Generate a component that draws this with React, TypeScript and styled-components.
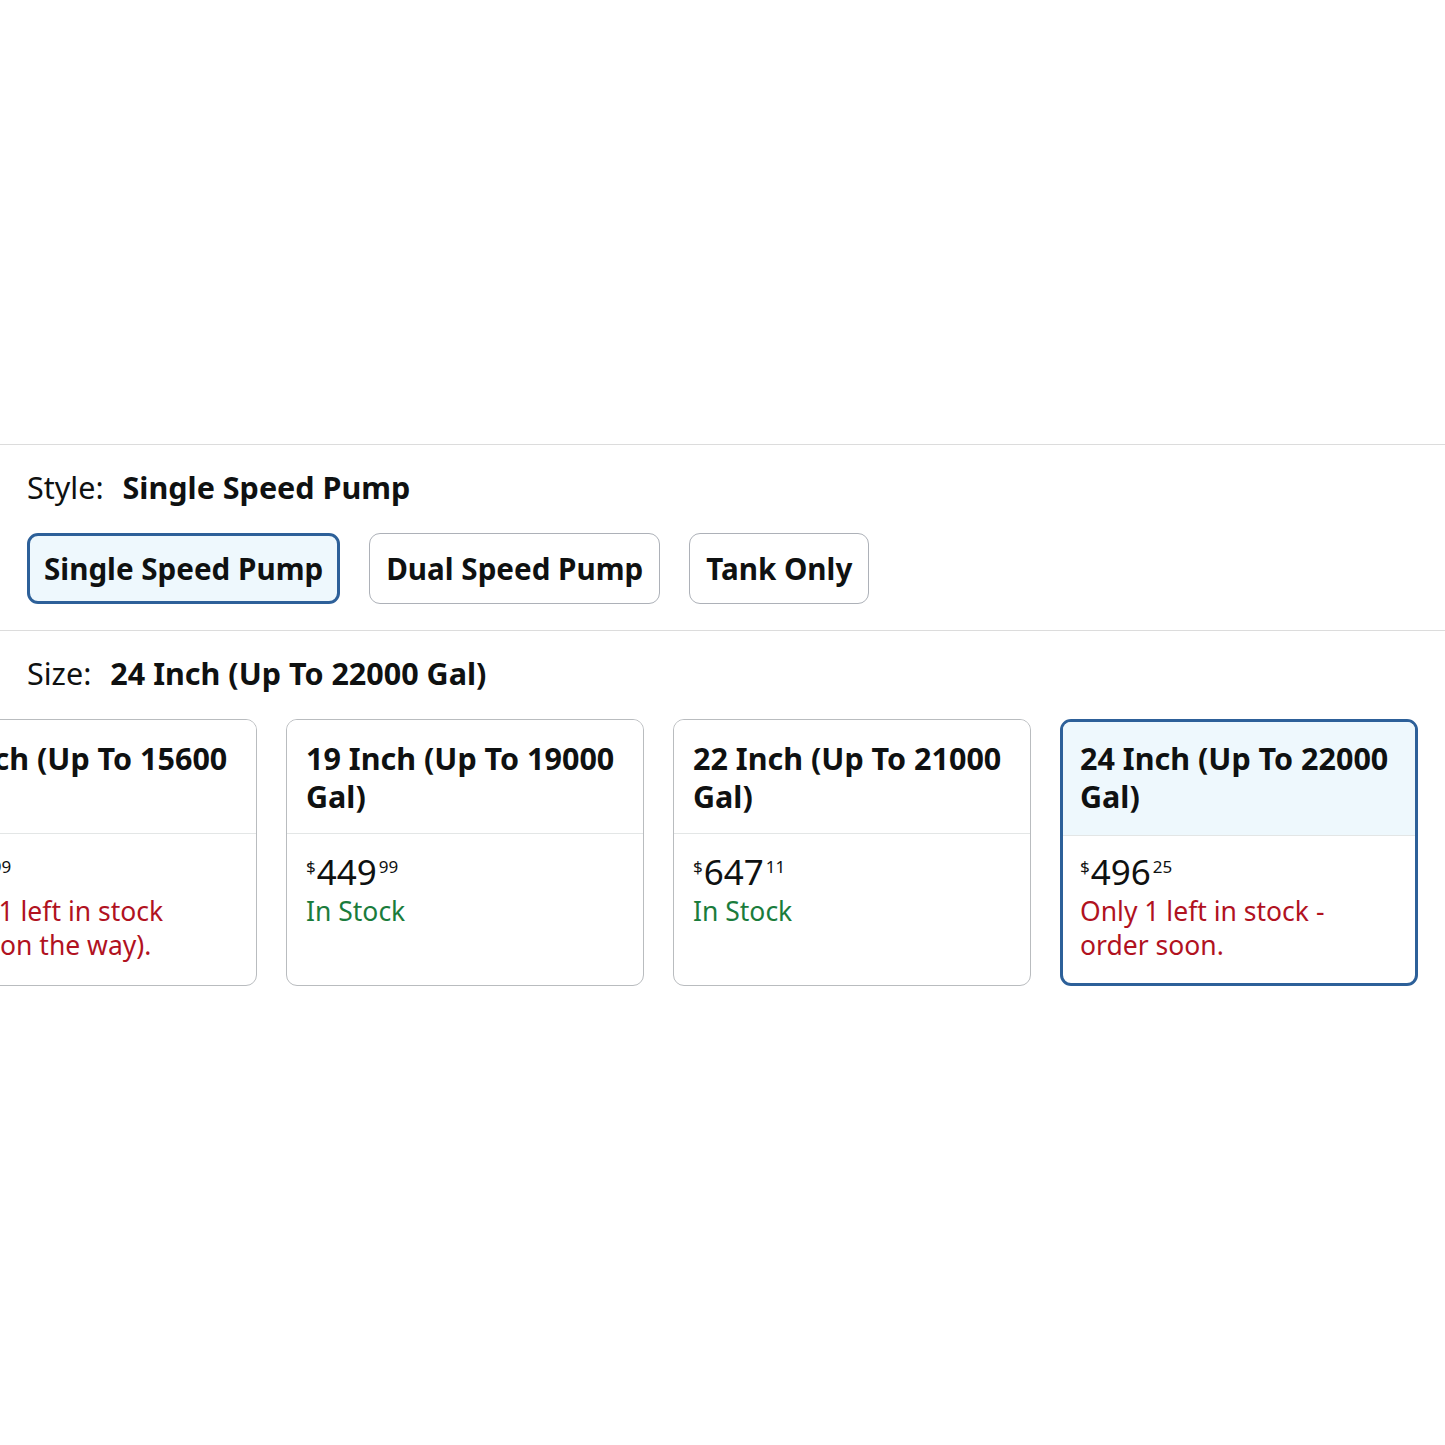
import React from "react";
import styled, { createGlobalStyle, css } from "styled-components";

const Global = createGlobalStyle`
  html, body { margin: 0; padding: 0; background: #ffffff; }
  body {
    font-family: "Noto Sans", "Open Sans", Arial, sans-serif;
    color: #0f1111;
    overflow-x: hidden;
  }
`;

const Page = styled.div`
  width: 1445px;
  height: 1445px;
  overflow: hidden;
  padding-top: 444px;
  box-sizing: border-box;
`;

const Section = styled.section`
  border-top: 1px solid #dcdcdc;
  padding: 24px 0 26px 27px;
  display: flex;
  flex-direction: column;
  gap: 28px;
`;

const Label = styled.div`
  font-size: 30.5px;
  line-height: 36px;
  display: flex;
  gap: 19px;
  white-space: nowrap;
`;

const LabelValue = styled.span`
  font-weight: 700;
`;

const ButtonRow = styled.div`
  display: flex;
  gap: 29px;
`;

const StyleButton = styled.button<{ $selected?: boolean }>`
  font-family: inherit;
  color: #0f1111;
  font-size: 29.6px;
  font-weight: 700;
  height: 71px;
  box-sizing: border-box;
  padding: 0 16px;
  border: 1px solid #adb1b8;
  border-radius: 11px;
  background: #ffffff;
  white-space: nowrap;
  ${(p) =>
    p.$selected &&
    css`
      border: 3px solid #2d6099;
      background: #eef8fd;
      padding: 0 14px;
    `}
`;

const CardTrack = styled.div`
  display: flex;
  gap: 29px;
  margin-left: -128px;
`;

const Card = styled.div<{ $selected?: boolean }>`
  flex: 0 0 358px;
  height: 267px;
  box-sizing: border-box;
  border: 1px solid #b9bcbf;
  border-radius: 11px;
  overflow: hidden;
  display: flex;
  flex-direction: column;
  ${(p) =>
    p.$selected &&
    css`
      border: 3px solid #2d6099;
    `}
`;

const CardHead = styled.div<{ $selected?: boolean }>`
  height: 114px;
  box-sizing: border-box;
  padding: ${(p) => (p.$selected ? "17px 17px 0 17px" : "19px 19px 0 19px")};
  border-bottom: 1px solid #e3e6e6;
  font-size: 30.5px;
  font-weight: 700;
  line-height: 38px;
  background: ${(p) => (p.$selected ? "#eef8fd" : "#ffffff")};
  white-space: nowrap;
`;

const HeadLine = styled.div``;

const CardBody = styled.div<{ $selected?: boolean }>`
  padding: ${(p) => (p.$selected ? "13px 17px 0 17px" : "15px 19px 0 19px")};
  white-space: nowrap;
`;

const Price = styled.div`
  display: flex;
  align-items: flex-start;
  height: 45px;
  line-height: 1;
`;

const Sym = styled.span`
  font-size: 17px;
  margin-top: 9px;
`;

const Whole = styled.span`
  font-size: 35px;
  margin-top: 5px;
  margin-left: 1px;
`;

const Frac = styled.span`
  font-size: 17px;
  margin-top: 9px;
  margin-left: 2px;
`;

const Stock = styled.div<{ $low?: boolean }>`
  font-size: 26.5px;
  line-height: 34px;
  color: ${(p) => (p.$low ? "#b1121f" : "#1a7c3c")};
`;

type CardData = {
  lines: string[];
  whole: string;
  frac: string;
  stock: string[];
  low?: boolean;
  selected?: boolean;
};

const cards: CardData[] = [
  {
    lines: ["16 Inch (Up To 15600", "Gal)"],
    whole: "399",
    frac: "99",
    stock: ["Only 11 left in stock", "(more on the way)."],
    low: true,
  },
  {
    lines: ["19 Inch (Up To 19000", "Gal)"],
    whole: "449",
    frac: "99",
    stock: ["In Stock"],
  },
  {
    lines: ["22 Inch (Up To 21000", "Gal)"],
    whole: "647",
    frac: "11",
    stock: ["In Stock"],
  },
  {
    lines: ["24 Inch (Up To 22000", "Gal)"],
    whole: "496",
    frac: "25",
    stock: ["Only 1 left in stock -", "order soon."],
    low: true,
    selected: true,
  },
];

export default function App() {
  return (
    <Page>
      <Global />
      <Section>
        <Label>
          <span>Style:</span>
          <LabelValue>Single Speed Pump</LabelValue>
        </Label>
        <ButtonRow>
          <StyleButton $selected>Single Speed Pump</StyleButton>
          <StyleButton>Dual Speed Pump</StyleButton>
          <StyleButton>Tank Only</StyleButton>
        </ButtonRow>
      </Section>
      <Section>
        <Label>
          <span>Size:</span>
          <LabelValue>24 Inch (Up To 22000 Gal)</LabelValue>
        </Label>
        <CardTrack>
          {cards.map((c, i) => (
            <Card key={i} $selected={c.selected}>
              <CardHead $selected={c.selected}>
                {c.lines.map((l, j) => (
                  <HeadLine key={j}>{l}</HeadLine>
                ))}
              </CardHead>
              <CardBody $selected={c.selected}>
                <Price>
                  <Sym>$</Sym>
                  <Whole>{c.whole}</Whole>
                  <Frac>{c.frac}</Frac>
                </Price>
                {c.stock.map((s, j) => (
                  <Stock key={j} $low={c.low}>
                    {s}
                  </Stock>
                ))}
              </CardBody>
            </Card>
          ))}
        </CardTrack>
      </Section>
    </Page>
  );
}
